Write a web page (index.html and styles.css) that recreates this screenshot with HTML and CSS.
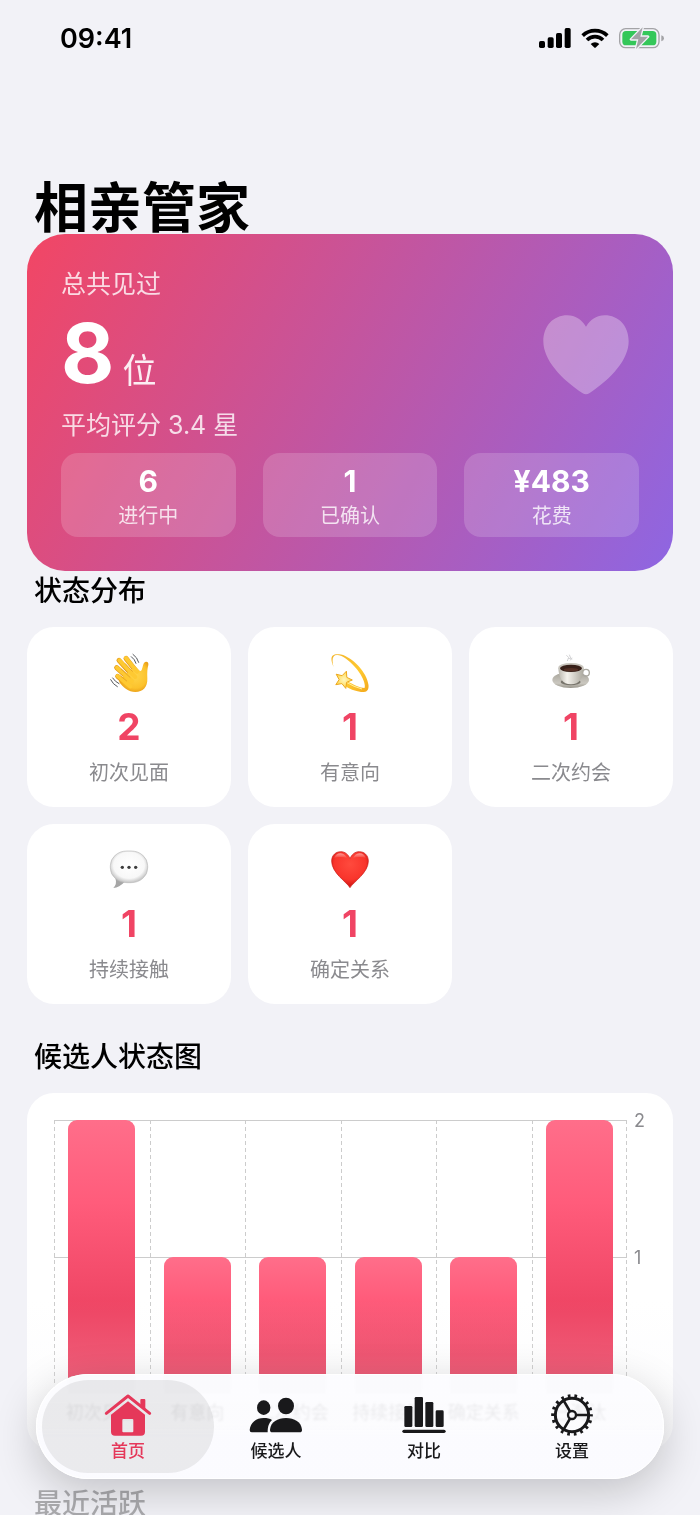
FILE: index.html
```html
<!DOCTYPE html>
<html lang="zh-CN">
<head>
<meta charset="utf-8">
<meta name="viewport" content="width=device-width, initial-scale=1">
<title>相亲管家</title>
<link rel="stylesheet" href="styles.css">
</head>
<body>
<div class="app">
  <div class="scroll">
    <header class="status-bar">
      <time class="clock">09:41</time>
      <div class="indicators">
        <svg width="32" height="22" viewBox="57 51 96 66" aria-label="信号">
          <rect x="57" y="93" width="18" height="21" rx="5"/>
          <rect x="83" y="82" width="18" height="32" rx="5"/>
          <rect x="108" y="69" width="18" height="45" rx="5"/>
          <rect x="134" y="54" width="18" height="60" rx="5"/>
        </svg>
        <svg width="28" height="22" viewBox="182 51 84 66" aria-label="无线网络">
          <g fill="none" stroke="#000" stroke-width="11">
            <path d="M187 77A53 53 0 0 1 261 77"/>
            <path d="M200 90A34 34 0 0 1 248 90"/>
          </g>
          <path d="M221 112L211 102A19 19 0 0 1 237 102L227 112Q224 115 221 112Z"/>
        </svg>
        <svg width="46" height="22" viewBox="297 51 138 66" aria-label="正在充电">
          <rect x="299" y="56" width="118" height="57" rx="18" fill="none" stroke="#a3a3a6" stroke-width="4"/>
          <path d="M424 76Q432 78 432 85Q432 92 424 94Z" fill="#a3a3a6"/>
          <rect x="307" y="63" width="102" height="43" rx="11" fill="#34c759"/>
          <path d="M368 52L333 88H355L348 117L384 80H361Z" fill="#a3a3a6" stroke="#f2f2f7" stroke-width="8" stroke-linejoin="round" paint-order="stroke"/>
        </svg>
      </div>
    </header>

    <main class="content">
      <h1 class="page-title">相亲管家</h1>

      <section class="hero">
        <div class="hero-top">
          <div class="hero-text">
            <p class="hero-label">总共见过</p>
            <p class="hero-count"><strong class="hero-number">8</strong><span class="hero-unit">位</span></p>
            <p class="hero-label">平均评分 3.4 星</p>
          </div>
          <svg class="hero-heart" width="86" height="80" viewBox="577 251 258 240" aria-hidden="true">
            <path d="M706 286C692 264 674 252 650 252C608 252 578 284 578 330C578 385 630 442 696 486Q706 492 716 486C782 442 834 385 834 330C834 284 804 252 762 252C738 252 720 264 706 286Z" fill="#fff" fill-opacity=".3"/>
          </svg>
        </div>
        <dl class="stats">
          <div class="stat"><dt>进行中</dt><dd>6</dd></div>
          <div class="stat"><dt>已确认</dt><dd>1</dd></div>
          <div class="stat"><dt>花费</dt><dd>¥483</dd></div>
        </dl>
      </section>

      <h2 class="section-title section-title-first">状态分布</h2>
      <section class="status-grid">
        <article class="status-card">
          <svg width="40" height="40" viewBox="266 96 120 120" aria-hidden="true">
            <defs>
              <radialGradient id="skin" cx=".55" cy=".45" r=".6"><stop offset="0" stop-color="#ffd54a"/><stop offset=".7" stop-color="#fcc22c"/><stop offset="1" stop-color="#e79a15"/></radialGradient>
            </defs>
            <g stroke="#e39a1c" stroke-width="15" stroke-linecap="round">
              <path d="M292 166L330 198M289 140L335 182M296 118L345 172M317 112L352 156"/>
            </g>
            <path d="M310 164L345 136Q354 146 359 150C366 152 366 134 371 126C376 119 386 122 384 132C381 143 380 154 381 172C382 199 368 213 345 213C325 212 308 199 296 182Z" fill="url(#skin)"/>
            <g stroke="#fec932" stroke-width="12" stroke-linecap="round">
              <path d="M292 165L330 196M290 140L335 180M297 118L345 168M317 111L350 152"/>
            </g>
            <path d="M302 166L319 180M303 145L329 169M315 128L336 151" stroke="#dc9620" stroke-width="2" stroke-linecap="round"/>
            <g fill="none" stroke="#55585c" stroke-width="3" stroke-linecap="round">
              <path d="M338 100Q351 109 355 124M333 107Q344 115 347 127M271 176Q278 190 291 197M277 171Q284 182 296 188"/>
            </g>
          </svg>
          <strong class="status-count">2</strong>
          <span class="status-name">初次见面</span>
        </article>
        <article class="status-card">
          <svg width="40" height="40" viewBox="330 652 40 40" aria-hidden="true">
            <defs>
              <linearGradient id="trail" x1="0" y1="0" x2="1" y2="1"><stop offset="0" stop-color="#f3b52b"/><stop offset=".6" stop-color="#ffc92f"/><stop offset="1" stop-color="#f3a81c"/></linearGradient>
              <radialGradient id="star"><stop offset="0" stop-color="#fff6bd"/><stop offset="1" stop-color="#ffd84c"/></radialGradient>
            </defs>
            <path d="M333.500 666C329 655 332 652 341 653.500C352 656 367 671 368.500 684C369 690 366 691.500 361 691C355 690 349 688 344 684L347 680C354 684 360 687 364.500 687C367 680 355 662 341.500 655C333.500 652 331 656 333.500 666Z" fill="url(#trail)"/>
            <path d="M346 681Q354 686 362 688" fill="none" stroke="#fff0a0" stroke-width="1"/>
            <path d="M346.400 670.200L346.800 676.400L352.300 679L346.600 681.300L345.800 687.400L341.900 682.600L335.800 683.700L339.100 678.600L336.200 673.200L342.100 674.700Z" fill="url(#star)" stroke="#eda81f" stroke-width="1" stroke-linejoin="round"/>
          </svg>
          <strong class="status-count">1</strong>
          <span class="status-name">有意向</span>
        </article>
        <article class="status-card">
          <svg width="40" height="40" viewBox="601 96 120 120" aria-hidden="true">
            <defs>
              <linearGradient id="saucer" x1="0" y1="0" x2="0" y2="1"><stop offset="0" stop-color="#a5a298"/><stop offset=".7" stop-color="#cbc8c0"/><stop offset="1" stop-color="#98958b"/></linearGradient>
              <linearGradient id="cup" x1="0" y1="0" x2="1" y2="0"><stop offset="0" stop-color="#b9b6ad"/><stop offset=".35" stop-color="#f4f2ec"/><stop offset="1" stop-color="#aaa79d"/></linearGradient>
            </defs>
            <ellipse cx="660" cy="177" rx="55" ry="24" fill="url(#saucer)"/>
            <ellipse cx="660" cy="183" rx="30" ry="10" fill="#77746b"/>
            <circle cx="706" cy="155" r="10" fill="none" stroke="#aaa8a0" stroke-width="4"/>
            <path d="M623 140C624 169 635 190 661 190C687 190 698 169 699 140Z" fill="url(#cup)"/>
            <ellipse cx="661" cy="140" rx="38" ry="14" fill="#c9c6be"/>
            <ellipse cx="661" cy="142" rx="33" ry="11" fill="#38211a"/>
            <ellipse cx="661" cy="146" rx="22" ry="5" fill="#553126"/>
            <path d="M647 103L654 109L650 120M656 101L660 111M664 110L659 118M652 112L665 114" fill="none" stroke="#d3d3d5" stroke-width="3"/>
          </svg>
          <strong class="status-count">1</strong>
          <span class="status-name">二次约会</span>
        </article>
        <article class="status-card">
          <svg width="40" height="40" viewBox="267 91 120 120" aria-hidden="true">
            <defs>
              <radialGradient id="bubble" cx=".5" cy=".45" r=".55"><stop offset="0" stop-color="#fff"/><stop offset=".75" stop-color="#f8f8f8"/><stop offset="1" stop-color="#c4c4c4"/></radialGradient>
            </defs>
            <path d="M286 176Q292 193 280 205Q298 204 314 186Z" fill="#a6a6a6"/>
            <rect x="271" y="94" width="112" height="95" rx="50" ry="44" fill="url(#bubble)" stroke="#b9b9b9" stroke-width="2"/>
            <circle cx="307" cy="143" r="5" fill="#3c3c3c"/><circle cx="327" cy="143" r="5" fill="#3c3c3c"/><circle cx="347" cy="143" r="5" fill="#3c3c3c"/>
          </svg>
          <strong class="status-count">1</strong>
          <span class="status-name">持续接触</span>
        </article>
        <article class="status-card">
          <svg width="40" height="40" viewBox="929 91 120 120" aria-hidden="true">
            <defs>
              <radialGradient id="love" cx=".5" cy=".35" r=".65"><stop offset="0" stop-color="#ff4a3d"/><stop offset=".65" stop-color="#f9352c"/><stop offset="1" stop-color="#c9100f"/></radialGradient>
              <linearGradient id="gloss" x1="0" y1="0" x2="0" y2="1"><stop offset="0" stop-color="#fff" stop-opacity=".5"/><stop offset="1" stop-color="#fff" stop-opacity="0"/></linearGradient>
            </defs>
            <path d="M989 204C978 186 934 160 934 124C934 106 947 96 961 96C974 96 984 104 989 117C994 104 1004 96 1017 96C1031 96 1044 106 1044 124C1044 160 1000 186 989 204Z" fill="url(#love)" stroke="#c51612" stroke-width="2"/>
            <path d="M941 116Q946 101 961 101Q975 102 980 116Q961 108 941 116ZM998 116Q1003 102 1017 101Q1032 101 1037 116Q1017 108 998 116Z" fill="url(#gloss)"/>
          </svg>
          <strong class="status-count">1</strong>
          <span class="status-name">确定关系</span>
        </article>
      </section>

      <h2 class="section-title">候选人状态图</h2>
      <section class="chart-card">
        <div class="chart">
          <div class="plot">
            <div class="column"><div class="bar" style="height:100%"></div></div>
            <div class="column"><div class="bar" style="height:50%"></div></div>
            <div class="column"><div class="bar" style="height:50%"></div></div>
            <div class="column"><div class="bar" style="height:50%"></div></div>
            <div class="column"><div class="bar" style="height:50%"></div></div>
            <div class="column"><div class="bar" style="height:100%"></div></div>
          </div>
          <div class="y-axis"><span>2</span><span>1</span></div>
          <div class="x-axis"><span>初次见面</span><span>有意向</span><span>二次约会</span><span>持续接触</span><span>确定关系</span><span>已淘汰</span></div>
        </div>
      </section>

      <h2 class="section-title">最近活跃</h2>
    </main>
  </div>

  <div class="scrim"></div>
  <nav class="tab-bar">
    <button class="tab tab-active" type="button" aria-current="page">
      <svg width="54" height="46" viewBox="303 156 162 138" aria-hidden="true">
        <path d="M319 220L384 168L449 220" fill="none" stroke="currentColor" stroke-width="9" stroke-linecap="round" stroke-linejoin="round"/>
        <path d="M421 194V180Q421 177 424 177H433Q436 177 436 180V207Z" fill="currentColor"/>
        <path fill-rule="evenodd" d="M384 184L435 224V275Q435 287 423 287H345Q333 287 333 275V224ZM370 237Q367 237 367 240V274Q367 277 370 277H397Q400 277 400 274V240Q400 237 397 237Z" fill="currentColor"/>
      </svg>
      <span>首页</span>
    </button>
    <button class="tab" type="button">
      <svg width="54" height="46" viewBox="747 156 162 138" aria-hidden="true" fill="currentColor">
        <ellipse cx="791" cy="203" rx="20" ry="22"/>
        <path d="M755 277Q749 277 749 270C751 248 769 234 791 234C802 234 810 236 816 240C807 249 803 259 803 277Z"/>
        <ellipse cx="858" cy="198" rx="24" ry="25"/>
        <path d="M817 277Q810 277 810 269C812 246 833 234 858 234C883 234 904 246 906 269Q906 277 899 277Z"/>
      </svg>
      <span>候选人</span>
    </button>
    <button class="tab" type="button">
      <svg width="54" height="46" viewBox="143 156 162 138" aria-hidden="true" fill="currentColor">
        <rect x="165" y="198" width="24" height="63" rx="4"/>
        <rect x="196" y="171" width="25" height="90" rx="4"/>
        <rect x="228" y="186" width="24" height="75" rx="4"/>
        <rect x="259" y="211" width="24" height="50" rx="4"/>
        <rect x="159" y="269" width="130" height="10" rx="5"/>
      </svg>
      <span>对比</span>
    </button>
    <button class="tab" type="button">
      <svg width="54" height="46" viewBox="585 156 162 138" aria-hidden="true" fill="none" stroke="currentColor">
        <circle cx="666" cy="225" r="50" stroke-width="9"/>
        <circle cx="666" cy="225" r="57" stroke-width="11" pathLength="180" stroke-dasharray="4 6" stroke-dashoffset="2"/>
        <circle cx="666" cy="225" r="12" stroke-width="7"/>
        <path d="M679 225H716M660 214L641 182M660 236L641 268" stroke-width="8"/>
      </svg>
      <span>设置</span>
    </button>
  </nav>
</div>
</body>
</html>
```

FILE: styles.css
```css
* {
  box-sizing: border-box;
}

body {
  margin: 0;
  background: #f2f2f7;
  color: #000;
  font-family: Inter, "Noto Sans CJK SC", sans-serif;
}

h1, h2, p, dl, dd {
  margin: 0;
}

svg {
  display: block;
}

.app {
  position: relative;
  height: 100vh;
  overflow: hidden;
}

.scroll {
  height: 100%;
  overflow-y: auto;
  scrollbar-width: none;
}

/* Status bar */
.status-bar {
  display: flex;
  align-items: center;
  justify-content: space-between;
  height: 76px;
  padding: 0 35px 0 60px;
}

.clock {
  padding-top: 2px;
  font-size: 27px;
  font-weight: 600;
  line-height: 32px;
}

.indicators {
  display: flex;
  gap: 10px;
}

.content {
  padding: 108px 27px 160px;
}

.page-title {
  padding-left: 7px;
  font-size: 54px;
  font-weight: 700;
  line-height: 50px;
}

/* Summary card */
.hero {
  padding: 34px;
  border-radius: 38px;
  background: linear-gradient(118deg, #f24664, #8e66e2);
  color: #fff;
}

.hero-top {
  display: flex;
  align-items: center;
  justify-content: space-between;
  padding-right: 10px;
  margin-bottom: 12px;
}

.hero-text {
  display: flex;
  flex-direction: column;
  gap: 4px;
}

.hero-label {
  color: rgba(255, 255, 255, .8);
  font-size: 25px;
  line-height: 32px;
}

.hero-count {
  display: flex;
  align-items: baseline;
  gap: 8px;
  height: 101px;
}

.hero-number {
  font-size: 82px;
  font-weight: 700;
  line-height: 100px;
}

.hero-unit {
  color: rgba(255, 255, 255, .9);
  font-size: 34px;
  line-height: 40px;
}

.stats {
  display: grid;
  grid-template-columns: repeat(3, 1fr);
  gap: 27px;
}

.stat {
  display: flex;
  flex-direction: column-reverse;
  align-items: center;
  gap: 5px;
  padding: 10px 10px 9px;
  border-radius: 17px;
  background: rgba(255, 255, 255, .17);
}

.stat dt {
  color: rgba(255, 255, 255, .8);
  font-size: 20px;
  line-height: 24px;
}

.stat dd {
  font-size: 30px;
  font-weight: 700;
  line-height: 36px;
}

/* Sections */
.section-title {
  margin: 33px 0 16px;
  padding-left: 7px;
  font-size: 28px;
  font-weight: 500;
  line-height: 40px;
}

.section-title-first {
  margin-top: 0;
}

.status-grid {
  display: grid;
  grid-template-columns: repeat(3, 1fr);
  gap: 17px;
}

.status-card {
  display: flex;
  flex-direction: column;
  align-items: center;
  gap: 14px;
  padding: 26px 0 22px;
  border-radius: 27px;
  background: #fff;
}

.status-count {
  color: #f04464;
  font-size: 37px;
  font-weight: 700;
  line-height: 40px;
}

.status-name {
  color: #8a8a8e;
  font-size: 20px;
  line-height: 24px;
}

/* Chart */
.chart-card {
  padding: 27px 27px 26px;
  border-radius: 27px;
  background: #fff;
}

.chart {
  display: grid;
  grid-template-columns: 1fr 19px;
  row-gap: 7px;
}

.plot {
  display: grid;
  grid-template-columns: repeat(6, 1fr);
  height: 274px;
  background:
    repeating-linear-gradient(#ccc 0 4px, transparent 4px 7px) right / 1px 100% no-repeat,
    linear-gradient(#ccc, #ccc) top / 100% 1px no-repeat,
    linear-gradient(#ccc, #ccc) center / 100% 1px no-repeat;
}

.column {
  display: flex;
  align-items: flex-end;
  justify-content: center;
  background: repeating-linear-gradient(#ccc 0 4px, transparent 4px 7px) left / 1px 100% no-repeat;
}

.bar {
  width: 70%;
  border-radius: 9px 9px 0 0;
  background: linear-gradient(#ff6e8a, #ff5c7b 30%, #ee4463 70%);
}

.y-axis {
  display: grid;
  grid-template-rows: 1fr 1fr;
  margin: -8px 0 8px;
  padding-left: 7px;
}

.y-axis span,
.x-axis span {
  color: #8a8a8e;
  font-size: 18px;
  line-height: 18px;
}

.x-axis {
  display: grid;
  grid-template-columns: repeat(6, 1fr);
}

.x-axis span {
  line-height: 24px;
  text-align: center;
}

/* Floating tab bar */
.scrim {
  position: absolute;
  right: 0;
  bottom: 0;
  left: 0;
  height: 215px;
  background: linear-gradient(rgba(242, 242, 247, 0), rgba(242, 242, 247, .15) 35%, rgba(242, 242, 247, .7) 85%);
  pointer-events: none;
}

.tab-bar {
  position: absolute;
  right: 36px;
  bottom: 36px;
  left: 36px;
  display: grid;
  grid-template-columns: repeat(4, 1fr);
  padding: 6px 18px;
  border-radius: 53px;
  background: linear-gradient(rgba(252, 252, 255, .98) 20%, rgba(252, 252, 255, .78) 28%, rgba(252, 252, 255, .78) 48%, rgba(251, 251, 255, .96) 60%);
  box-shadow: 0 12px 44px rgba(0, 0, 0, .2), inset 0 0 0 1px #fff;
  backdrop-filter: grayscale(1) blur(1px);
}

.tab {
  position: relative;
  display: flex;
  flex-direction: column;
  align-items: center;
  gap: 2px;
  padding: 12px 0 11px;
  border: 0;
  background: none;
  color: #19191b;
  font-family: inherit;
  font-size: 17px;
  font-weight: 500;
  line-height: 22px;
}

.tab-active {
  color: #e5385a;
}

.tab-active::before {
  content: "";
  position: absolute;
  z-index: -1;
  inset: 0 -12px;
  border-radius: 47px;
  background: rgba(20, 20, 30, .08);
}
```
